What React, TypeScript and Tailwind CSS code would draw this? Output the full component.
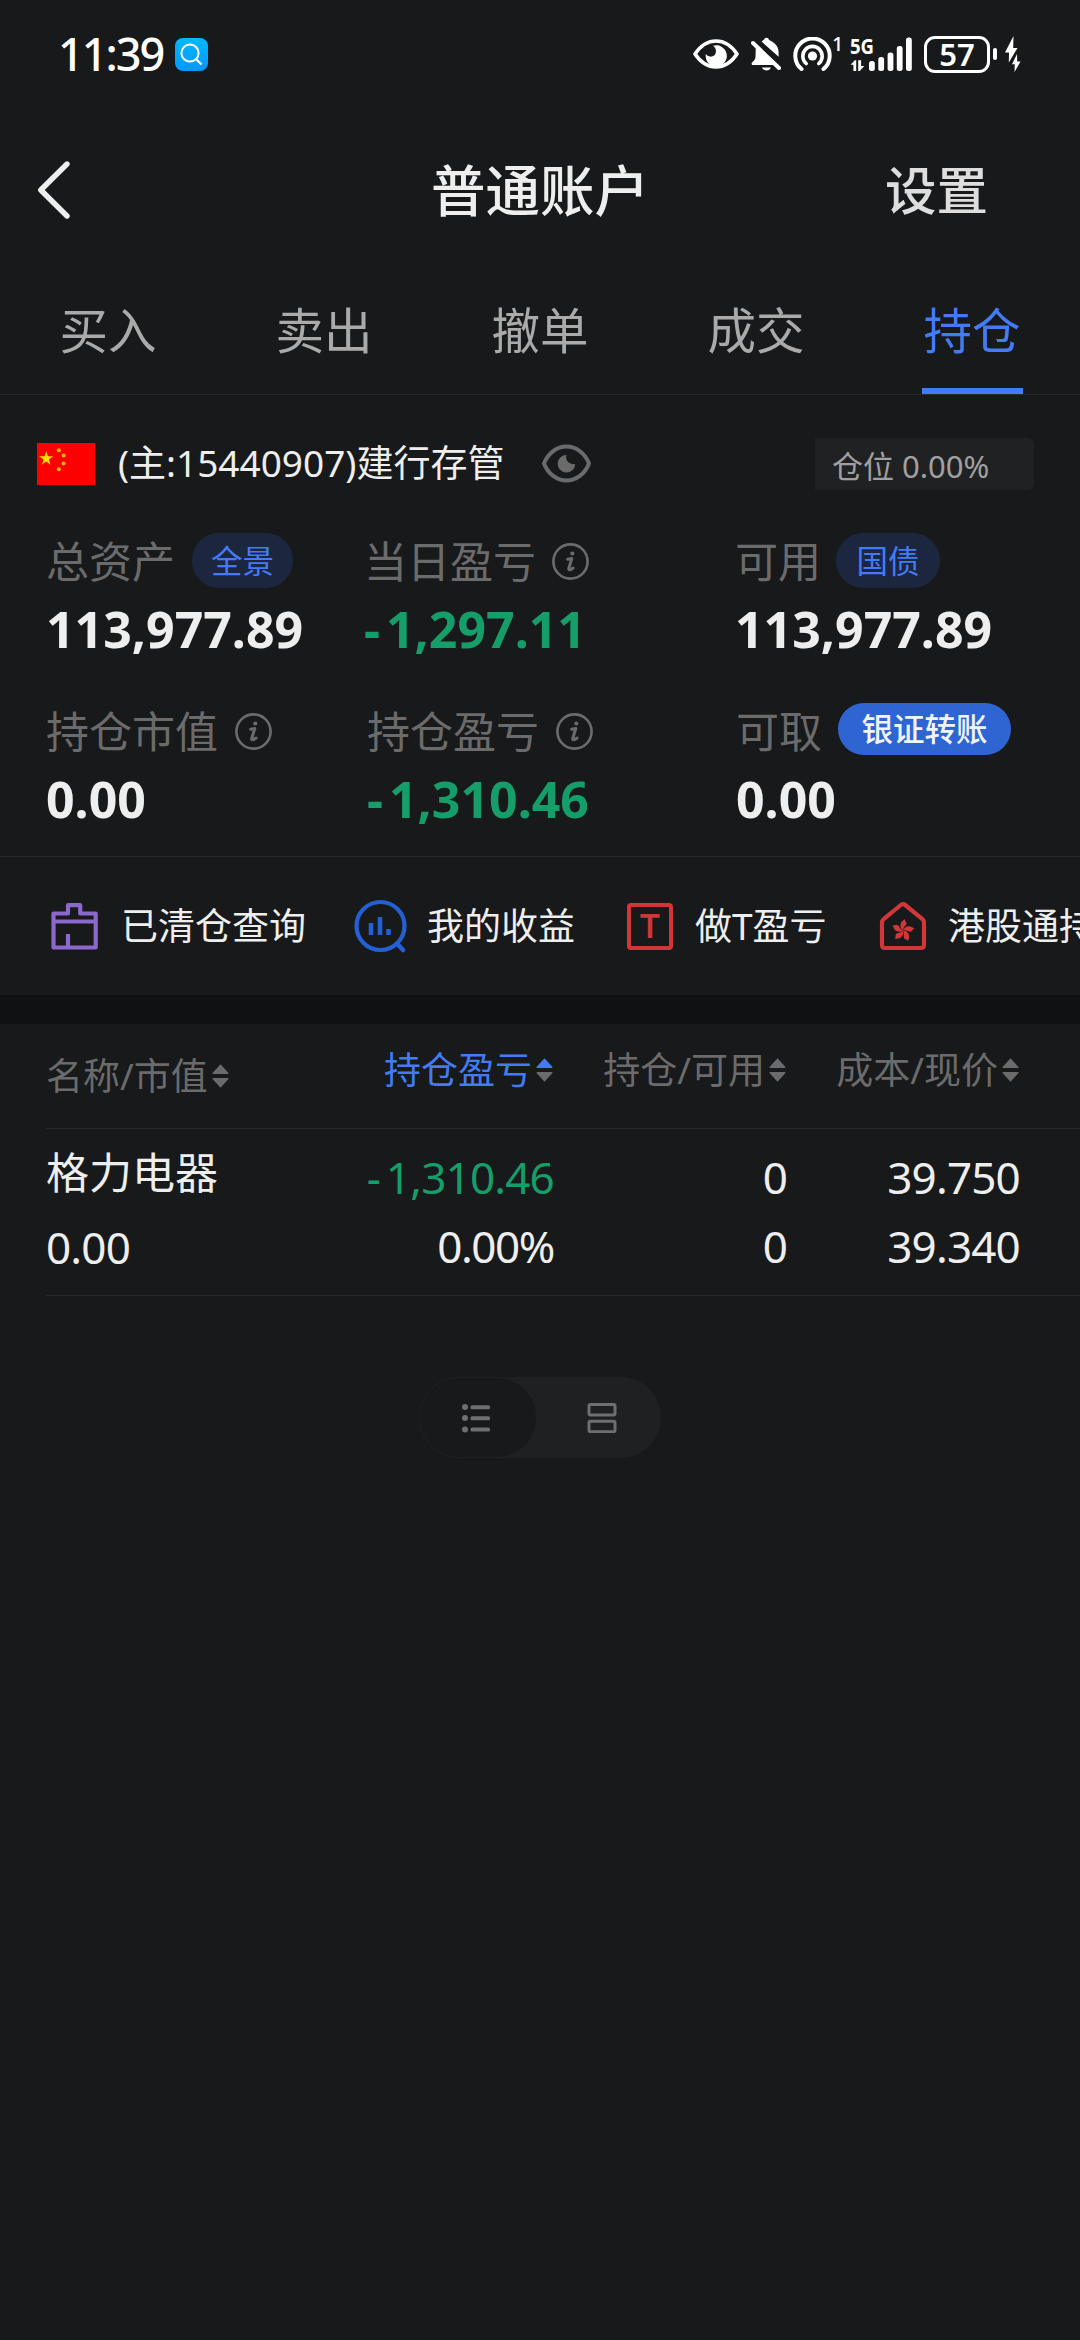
import React from "react";
import clsx from "clsx";

const tabs = ["买入", "卖出", "撤单", "成交", "持仓"];
const activeTab = "持仓";

const holdings = [
  {
    name: "格力电器",
    marketValue: "0.00",
    profit: "-1,310.46",
    profitRate: "0.00%",
    amount: "0",
    available: "0",
    cost: "39.750",
    price: "39.340",
  },
];

// --- Icons ---

const StatusEye = () => (
  <svg width="46" height="34" viewBox="0 0 46 34" fill="none">
    <path
      d="M2 17C8 8 15 4 23 4s15 4 21 13c-6 9-13 13-21 13S8 26 2 17Z"
      stroke="#fff"
      strokeWidth="3.6"
      strokeLinejoin="round"
    />
    <path
      d="M20 8.8a10.6 10.6 0 1 1-7.2 8.3c2 3 7 3.600 9.200.4 2-3 .8-6.800-2-8.700Z"
      fill="#fff"
    />
  </svg>
);

const StatusBellOff = () => (
  <svg width="30" height="34" viewBox="0 0 30 34" fill="none">
    <path
      d="M10.500 4.500C12 3.400 13 3.200 13.500 1.800c1-1.400 3-1.400 4 0 .4 1.200 1 1.500 2.500 2.200 5 2.600 7.600 6.500 7.600 11.500v4.300Z"
      fill="#fff"
    />
    <path d="M4.800 10.500 23 28H2.300c-2 0-2.200-1.800-.8-3 2-1.600 3-3 3-5.500Z" fill="#fff" />
    <path d="M11 30.500h9c-1.500 4-7.500 4-9 0Z" fill="#fff" />
    <path d="M2 6 28 31" stroke="#fff" strokeWidth="4" strokeLinecap="round" />
  </svg>
);

const StatusHotspot = () => (
  <svg width="39" height="34" viewBox="0 0 39 34" fill="none">
    <circle cx="19.500" cy="19" r="4.600" fill="#fff" />
    <path
      d="M13.200 26.500a9.700 9.700 0 1 1 12.600 0"
      stroke="#fff"
      strokeWidth="3.600"
      strokeLinecap="round"
    />
    <path
      d="M8.500 32a17.200 17.200 0 1 1 22 0"
      stroke="#fff"
      strokeWidth="4"
      strokeLinecap="round"
    />
  </svg>
);

const StatusSignal = () => (
  <svg
    width="62"
    height="34"
    viewBox="0 0 62 34"
    fill="#fff"
    className="overflow-visible"
  >
    <text
      x="0"
      y="16.500"
      fontSize="22"
      fontWeight="700"
      fontFamily="'Noto Sans', sans-serif"
      textLength="24"
      lengthAdjust="spacingAndGlyphs"
    >
      5G
    </text>
    <path d="M6.200 34V23.200H4.800L.6 27.700h2.800V34ZM8.200 23.200V34h1.500l4.600-5h-3.200v-5.800Z" />
    <rect x="19" y="24" width="5.800" height="10" rx="2.500" />
    <rect x="28.300" y="20" width="5.800" height="14" rx="2.500" />
    <rect x="37.600" y="15.500" width="5.800" height="18.500" rx="2.500" />
    <rect x="46.800" y="9" width="5.800" height="25" rx="2.500" />
    <rect x="56" y="0.5" width="5.800" height="33.500" rx="2.500" />
  </svg>
);

const StatusBolts = () => (
  <svg width="16" height="36" viewBox="0 0 16 36" fill="#fff">
    <path d="M8.500 0 0 16.500h4L3.800 26.500 12.500 12H8.200Z" />
    <path d="M12 18 7 28.200h2.800L9.500 36 15.500 25.500h-3.300Z" />
  </svg>
);

const EyeIcon = () => (
  <svg width="51" height="39" viewBox="0 0 51 39" fill="none">
    <path
      d="M3 19.500C7 9 16 2.500 25.500 2.500S44 9 48 19.500C44 30 35 36.500 25.500 36.500S7 30 3 19.500Z"
      stroke="#6b6b6b"
      strokeWidth="4"
      strokeLinejoin="round"
    />
    <path
      d="M25.500 11c-1 4 0 9 8.700 9.200a8.800 8.800 0 1 1-8.700-9.200Z"
      fill="#6b6b6b"
    />
  </svg>
);

const InfoIcon = () => (
  <svg width="37" height="37" viewBox="0 0 37 37" fill="none" stroke="#6b6b6b">
    <circle cx="18.500" cy="18.500" r="17.100" strokeWidth="2.600" />
    <circle cx="20.300" cy="10.500" r="2.100" fill="#6b6b6b" stroke="none" />
    <path
      d="M15.600 16.300l4.200-.8-3 9.700c-.6 2.200 1.500 2 4.300-.2"
      strokeWidth="3"
      strokeLinecap="round"
      strokeLinejoin="round"
    />
  </svg>
);

const FlagIcon = () => (
  <svg width="58" height="42" viewBox="0 0 58 42">
    <rect width="58" height="42" fill="#fe0000" />
    <path
      d="M9.200 8l1.700 5.200h5.300l-4.300 3.200 1.600 5.300-4.300-3.200-4.300 3.200 1.600-5.300-4.300-3.200h5.300Z"
      fill="#ffe100"
    />
    <g fill="#ffb400">
      <circle cx="21.800" cy="7.300" r="2" />
      <circle cx="26.600" cy="12.600" r="2" />
      <circle cx="26.600" cy="20.600" r="2" />
      <circle cx="21.800" cy="26.200" r="2" />
    </g>
  </svg>
);

const ClearedIcon = () => (
  <svg width="48" height="48" viewBox="0 0 48 48" fill="none">
    <path
      d="M2.500 45.500V11.500H17V3.200h12.200v8.300h15.500v34Z"
      stroke="#8a68cc"
      strokeWidth="4.200"
      strokeLinejoin="round"
    />
    <path d="M3 19.500h41M17 32v12" stroke="#8a68cc" strokeWidth="4.200" />
  </svg>
);

const IncomeIcon = () => (
  <svg width="54" height="54" viewBox="0 0 54 54" fill="none" stroke="#2360d4">
    <circle cx="26.500" cy="27" r="24" strokeWidth="4.200" />
    <path d="M43 44.500l6 6.500" strokeWidth="4.600" strokeLinecap="round" />
    <path d="M17 24v12M26 18v18M34.500 30v6" strokeWidth="4.600" />
  </svg>
);

const TIcon = () => (
  <div className="flex h-[47px] w-[46px] items-center justify-center rounded-[4px] border-4 border-[#d13639] font-['Inter',sans-serif] text-[33px] leading-[39px] font-semibold text-[#d13639]">
    T
  </div>
);

const HongKongIcon = () => (
  <svg width="48" height="50" viewBox="0 0 48 50" fill="none">
    <path
      d="M3 21.500c0-1.500.4-2.400 1.600-3.400L21.800 4c1.500-1.200 2.900-1.200 4.400 0l17.200 14.100c1.200 1 1.600 1.900 1.600 3.400V44c0 2-1 3-3 3H6c-2 0-3-1-3-3Z"
      stroke="#d13639"
      strokeWidth="4.200"
      strokeLinejoin="round"
    />
    <g fill="#d13639">
      {[0, 72, 144, 216, 288].map((deg) => (
        <path
          key={deg}
          d="M24 29.500c-3.800-2.800-3.800-8.800 2.200-11.500-.6 1.800.6 2.300 1.200 3.600 1 2.600-3 3.600-3.400 7.900Z"
          transform={`rotate(${deg} 24 29.500)`}
        />
      ))}
    </g>
  </svg>
);

const SortIcon = ({ active = false }: { active?: boolean }) => (
  <svg width="17" height="24" viewBox="0 0 17 24" fill="#6b6b6b">
    <path
      d="M8.500.3 16.500 9q.3 1-.8 1H1.300q-1.100 0-.8-1Z"
      fill={active ? "#437bf5" : "#6b6b6b"}
    />
    <path d="M8.500 23.700.5 15q-.3-1 .8-1h14.400q1.100 0 .8 1Z" />
  </svg>
);

// --- Pieces ---

interface StatProps {
  label: string;
  value: string;
  className: string;
  negative?: boolean;
  children?: React.ReactNode;
}

const Stat: React.FC<StatProps> = ({
  label,
  value,
  className,
  negative,
  children,
}) => (
  <div className={clsx("shrink-0 whitespace-nowrap", className)}>
    <div className="flex h-[55px] items-start">
      <span className="text-[43px] leading-[57px] text-[#6b6b6b]">
        {label}
      </span>
      {children}
    </div>
    <div
      className={clsx(
        "text-[50px] leading-[83px] font-bold",
        negative
          ? "text-[#169e6a] first-letter:tracking-[6px]"
          : "text-[#eeeeee]",
      )}
    >
      {value}
    </div>
  </div>
);

const HeaderCell = ({
  label,
  active,
  className,
}: {
  label: string;
  active?: boolean;
  className: string;
}) => (
  <div className={clsx("flex shrink-0 items-center gap-1", className)}>
    <span
      className={clsx(
        "text-[37px] leading-[92px] whitespace-nowrap",
        active ? "text-[#437bf5]" : "text-[#6b6b6b]",
      )}
    >
      {label}
    </span>
    <SortIcon active={active} />
  </div>
);

export default function App() {
  return (
    <div className="h-[2340px] w-[1080px] overflow-hidden bg-[#17191a] font-['Noto_Sans','Noto_Sans_CJK_SC',sans-serif] text-[#eeeeee]">
      {/* Status bar */}
      <div className="flex h-[108px] items-center pl-[58px] text-white">
        <span className="w-[117px] text-[45px] leading-[46px] font-medium tracking-[-2px]">
          11:39
        </span>
        <div className="flex size-[33px] items-center justify-center rounded-[8px] bg-gradient-to-b from-[#00b7ff] to-[#0098ff]">
          <svg width="33" height="33" viewBox="0 0 33 33" fill="none" stroke="#fff">
            <circle cx="15" cy="15" r="8.600" strokeWidth="2" />
            <path d="M21 21l5.500 5.500" strokeWidth="2.200" />
          </svg>
        </div>
        <div className="ml-[485px] flex items-center">
          <StatusEye />
          <div className="ml-3">
            <StatusBellOff />
          </div>
          <div className="ml-3">
            <StatusHotspot />
          </div>
          <span className="-mt-5 w-[18px] text-[20px] leading-5 font-medium">
            1
          </span>
          <StatusSignal />
          <div className="ml-3 flex h-[37px] w-[66px] items-center justify-center rounded-[11px] border-[3px] border-white text-[31px] leading-[31px] font-semibold">
            57
          </div>
          <div className="ml-[3px] h-3 w-1 rounded-[2px] bg-white" />
          <div className="ml-2">
            <StatusBolts />
          </div>
        </div>
      </div>

      {/* Nav bar */}
      <div className="flex h-[164px] items-center">
        <div className="w-[250px] pl-[37px]">
          <svg width="36" height="60" viewBox="0 0 36 60" fill="none">
            <path
              d="M30 4 3.800 30 30 56"
              stroke="#eeeeee"
              strokeWidth="5.400"
              strokeLinecap="round"
              strokeLinejoin="round"
            />
          </svg>
        </div>
        <h1 className="w-[580px] text-center text-[54.500px] leading-[163px] font-medium">
          普通账户
        </h1>
        <span className="ml-[55px] text-[51.500px] leading-[163px] font-medium text-[#dedede]">
          设置
        </span>
      </div>

      {/* Tabs */}
      <div className="grid h-[123px] grid-cols-5 border-b border-[#27292b]">
        {tabs.map((tab) => (
          <div
            key={tab}
            className={clsx(
              "flex flex-col items-center text-[48.500px] leading-[116px]",
              tab === activeTab ? "text-[#437bf5]" : "text-[#aaaaaa]",
            )}
          >
            <span>{tab}</span>
            {tab === activeTab && (
              <div className="h-1.5 w-[101px] bg-[#437bf5]" />
            )}
          </div>
        ))}
      </div>

      {/* Account */}
      <div className="flex h-[138px] items-center pr-[46px] pl-[37px]">
        <FlagIcon />
        <span className="mb-0.5 ml-[23px] w-[387px] text-[37px] leading-[136px] whitespace-nowrap">
          (主:15440907)建行存管
        </span>
        <div className="mb-0.5 ml-9">
          <EyeIcon />
        </div>
        <div className="ml-auto h-[52px] w-[219px] rounded-r-[6px] bg-[#202123] pl-[17px] text-[31px] leading-[56px] text-[#a0a0a0]">
          仓位 0.00%
        </div>
      </div>

      {/* Asset summary */}
      <div className="flex h-[137px] pl-[46px]">
        <Stat label="总资产" value="113,977.89" className="w-[318px]">
          <span className="ml-[17px] h-[55px] w-[101px] rounded-[27px] bg-[#1c263f] text-center text-[31.500px] leading-[55px] text-[#437bf5]">
            全景
          </span>
        </Stat>
        <Stat label="当日盈亏" value="-1,297.11" negative className="w-[371px]">
          <div className="mt-2.5 ml-4">
            <InfoIcon />
          </div>
        </Stat>
        <Stat label="可用" value="113,977.89" className="w-[340px]">
          <span className="ml-[15px] h-[55px] w-[104px] rounded-[27px] bg-[#1c263f] text-center text-[31.500px] leading-[55px] text-[#437bf5]">
            国债
          </span>
        </Stat>
      </div>
      <div className="flex h-[187px] border-b border-[#27292b] pt-[33px] pl-[46px]">
        <Stat label="持仓市值" value="0.00" className="w-[321px]">
          <div className="mt-2.5 ml-[17px]">
            <InfoIcon />
          </div>
        </Stat>
        <Stat label="持仓盈亏" value="-1,310.46" negative className="w-[369px]">
          <div className="mt-2.5 ml-[17px]">
            <InfoIcon />
          </div>
        </Stat>
        <Stat label="可取" value="0.00" className="w-[340px]">
          <span className="ml-4 h-[52px] w-[173px] rounded-[26px] bg-[#2f65d2] text-center text-[31.500px] leading-[51px] font-medium text-[#f0f4ff]">
            银证转账
          </span>
        </Stat>
      </div>

      {/* Shortcuts */}
      <div className="flex h-[138px] items-center overflow-hidden pl-[51px] text-[37px] leading-[138px] whitespace-nowrap">
        <div className="flex w-[303px] shrink-0 items-center">
          <ClearedIcon />
          <span className="ml-[22px]">已清仓查询</span>
        </div>
        <div className="flex w-[273px] shrink-0 items-center">
          <IncomeIcon />
          <span className="ml-[19px]">我的收益</span>
        </div>
        <div className="flex w-[252px] shrink-0 items-center">
          <TIcon />
          <span className="ml-[22px]">做T盈亏</span>
        </div>
        <div className="flex shrink-0 items-center">
          <HongKongIcon />
          <span className="ml-[21px]">港股通持仓</span>
        </div>
      </div>
      <div className="h-[29px] bg-[#101113]" />

      {/* Holdings */}
      <div className="pl-[46px]">
        <div className="flex h-[105px] items-start border-b border-[#27292b]">
          <HeaderCell label="名称/市值" className="mt-1.5 w-[260px]" />
          <HeaderCell
            label="持仓盈亏"
            active
            className="w-[247px] justify-end"
          />
          <HeaderCell label="持仓/可用" className="w-[233px] justify-end" />
          <HeaderCell label="成本/现价" className="w-[233px] justify-end" />
        </div>
        {holdings.map((item) => (
          <div
            key={item.name}
            className="flex h-[167px] border-b border-[#27292b] text-[44px] leading-[69px] tracking-[-0.8px]"
          >
            <div className="w-[260px] pt-[9px]">
              <div className="text-[43px] tracking-normal">{item.name}</div>
              <div className="pt-1.5">{item.marketValue}</div>
            </div>
            <div className="w-[248px] pt-3.5 text-right">
              <div className="text-[#169e6a] first-letter:tracking-[5px]">
                {item.profit}
              </div>
              <div className="tracking-[-1.4px]">{item.profitRate}</div>
            </div>
            <div className="w-[233px] pt-3.5 text-right">
              <div>{item.amount}</div>
              <div>{item.available}</div>
            </div>
            <div className="w-[233px] pt-3.5 text-right">
              <div>{item.cost}</div>
              <div>{item.price}</div>
            </div>
          </div>
        ))}
      </div>

      {/* View switch */}
      <div className="mx-auto mt-[81px] flex h-[81px] w-[242px] rounded-[40px] bg-[#1f2022] p-px">
        <div className="flex w-[116px] items-center justify-center rounded-[39px] bg-[#17191a] pr-1">
          <svg width="28" height="30" viewBox="0 0 28 30" fill="#6f6f6f">
            <circle cx="3" cy="4" r="3" />
            <circle cx="3" cy="15" r="3" />
            <circle cx="3" cy="26.500" r="3" />
            <rect x="8.500" y="2.300" width="19.500" height="4" rx="1.500" />
            <rect x="8.500" y="13.300" width="19.500" height="4" rx="1.500" />
            <rect x="8.500" y="24.600" width="19.500" height="4" rx="1.500" />
          </svg>
        </div>
        <div className="flex flex-1 items-center justify-center pl-2">
          <svg
            width="30"
            height="30"
            viewBox="0 0 30 30"
            fill="none"
            stroke="#6f6f6f"
            strokeWidth="3"
          >
            <rect x="2" y="1.500" width="26" height="10.500" rx="1.500" />
            <rect x="2" y="18.200" width="26" height="10.500" rx="1.500" />
          </svg>
        </div>
      </div>
    </div>
  );
}
